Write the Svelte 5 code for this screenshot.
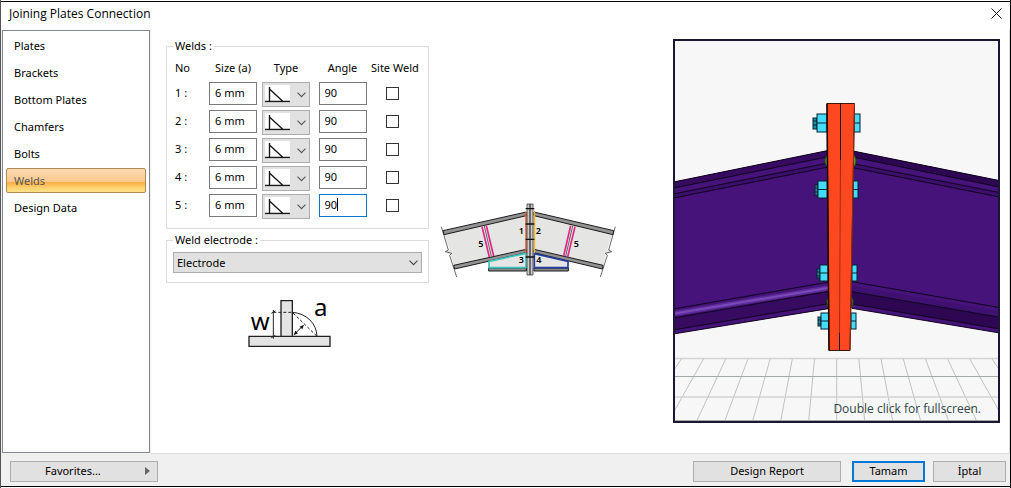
<script lang="ts">
  const pages = ['Plates', 'Brackets', 'Bottom Plates', 'Chamfers', 'Bolts', 'Welds', 'Design Data'];
  let page = $state('Welds');

  let welds = $state(
    [1, 2, 3, 4, 5].map((no) => ({ no, size: '6 mm', type: 'fillet', angle: '90', site: false }))
  );
  let active = $state(5);
  let electrode = $state('Electrode');

  // nut, stub and head positions of each bolt row in the 3D view
  const bolts = [
    { y: 114, h: 18, nut: 817, stub: 813, left: 827, right: 854, head: 6 },
    { y: 181, h: 17, nut: 818, stub: 815, left: 827, right: 853, head: 5 },
    { y: 265, h: 16, nut: 820, stub: 817, left: 828, right: 852, head: 5 },
    { y: 313, h: 16, nut: 821, stub: 818, left: 829, right: 851, head: 5 }
  ];
  const gridLines = [-7, -6, -5, -4, -3, -2, -1, 0, 1, 2, 3, 4, 5, 6, 7];
</script>

<div class="window">
  <header>
    <h1>Joining Plates Connection</h1>
    <button class="close" aria-label="Close">
      <svg width="11" height="11" viewBox="0 0 11 11"><path d="M.5 .5l10 10M10.5 .5l-10 10" stroke="#111" fill="none" /></svg>
    </button>
  </header>

  <main>
    <nav>
      {#each pages as name}
        <button class:selected={page === name} onclick={() => (page = name)}>{name}</button>
      {/each}
    </nav>

    <section class="content">
      <div class="form">
        <fieldset class="welds">
          <legend>Welds :</legend>
          <table>
            <thead>
              <tr>
                <th class="no">No</th>
                <th class="size">Size (a)</th>
                <th class="type">Type</th>
                <th class="angle">Angle</th>
                <th class="site">Site Weld</th>
              </tr>
            </thead>
            <tbody>
              {#each welds as weld}
                <tr>
                  <td class="no">{weld.no} :</td>
                  <td class="size"><input type="text" aria-label="Size {weld.no}" bind:value={weld.size} /></td>
                  <td class="type">
                    <div class="picker">
                      <select aria-label="Type {weld.no}" bind:value={weld.type}>
                        <option value="fillet" aria-label="Fillet"></option>
                      </select>
                      <svg class="weld-icon" width="25" height="18" viewBox="0 0 25 18">
                        <rect width="25" height="18" fill="#fff" />
                        <path d="M4.500 2V16.500M0 16.500H25M4.500 4L18 16.500" stroke="#1a1a1a" stroke-width="1.400" fill="none" />
                      </svg>
                      <svg class="chevron" width="9" height="6" viewBox="0 0 9 6"><path d="M.5 .7l4 4l4-4" stroke="#555" stroke-width="1.100" fill="none" /></svg>
                    </div>
                  </td>
                  <td class="angle">
                    <div class="picker">
                      <input
                        type="text"
                        aria-label="Angle {weld.no}"
                        class:active={active === weld.no}
                        bind:value={weld.angle}
                        onfocus={() => (active = weld.no)}
                      />
                      {#if active === weld.no}<span class="caret"></span>{/if}
                    </div>
                  </td>
                  <td class="site"><input type="checkbox" aria-label="Site weld {weld.no}" bind:checked={weld.site} /></td>
                </tr>
              {/each}
            </tbody>
          </table>
        </fieldset>

        <fieldset class="electrode">
          <legend>Weld electrode :</legend>
          <div class="picker">
            <select aria-label="Weld electrode" bind:value={electrode}>
              <option>Electrode</option>
            </select>
            <svg class="chevron" width="9" height="6" viewBox="0 0 9 6"><path d="M.5 .7l4 4l4-4" stroke="#444" stroke-width="1.100" fill="none" /></svg>
          </div>
        </fieldset>

        <svg class="throat" width="84" height="60" viewBox="25 -8 252 180">
          <g fill="#e4e4e4" stroke="#222" stroke-width="4">
            <path d="M124 30H158V137H124zM28 137H271V167H28z" />
          </g>
          <g fill="none" stroke="#222" stroke-width="3">
            <path d="M101 58V144M158 65C200 68 231 98 232 137" />
            <path d="M101 65H158L232 137" stroke-dasharray="9 6" />
            <path d="M167 128L188 107" />
          </g>
          <path d="M95 68l12-7M95 141l12-7" stroke="#222" stroke-width="3" />
          <path d="M162 134l5-14l8 8zM193 102l-5 14l-8-8z" fill="#111" />
          <text x="33" y="119" font-size="72">w</text>
          <text x="223" y="77" font-size="72">a</text>
        </svg>
      </div>

      <svg class="joint" width="177" height="77" viewBox="15 20 531 231">
        <g stroke="#1c1c1c" stroke-width="3" stroke-linejoin="round">
          <path d="M25 112L274 55V165L58 217L47 172L40 176L33 167L45 163z" fill="#e5e5e4" stroke="none" />
          <path d="M535 112L297 55V165L503 217L514 172L520 176L527 167L516 163z" fill="#e5e5e4" stroke="none" />
          <path d="M24 106L274 50V61L27 118zM56 210L274 162V172L59 221z" fill="#929292" />
          <path d="M536 106L297 50V61L534 118zM504 210L297 162V172L502 221z" fill="#929292" />
          <path d="M161 218H274V227H161zM297 218H400V227H297z" fill="#888" />
          <path d="M19 94L40 164L31 169L50 174L44 180L65 245M541 94L521 164L530 169L511 174L517 180L496 245" fill="none" stroke-width="2" />
        </g>
        <path d="M162 217V198L273 174V217z" fill="#e5e5e4" stroke="#3cc3bf" stroke-width="5" />
        <path d="M298 217V175L399 198V217z" fill="#e5e5e4" stroke="#243c9c" stroke-width="5" />
        <path d="M141 94L163 185M154 91L176 182M407 91L386 182M420 94L398 185" stroke="#e32486" stroke-width="5" />
        <path d="M148 92L169 183M413 92L392 183" stroke="#222" stroke-width="2" />
        <path d="M273 50V173" stroke="#e66733" stroke-width="5" />
        <path d="M298 50V173" stroke="#efb52d" stroke-width="5" />
        <path d="M276 26H285V239H276zM285 26H294V239H285z" fill="#cbcbcb" stroke="#1c1c1c" stroke-width="2" />
        <path d="M272 40H298M272 86H298M272 132H298M272 185H298" stroke="#111" stroke-width="4" />
        <g font-size="27" font-weight="600">
          <text x="251" y="116">1</text>
          <text x="302" y="116">2</text>
          <text x="251" y="202">3</text>
          <text x="304" y="202">4</text>
          <text x="130" y="156">5</text>
          <text x="416" y="156">5</text>
        </g>
      </svg>

      <div class="viewer">
        <svg viewBox="675 41 323 380" preserveAspectRatio="xMidYMid slice">
          <rect x="675" y="41" width="323" height="380" fill="#f7f7f7" />

          <g fill="none">
            {#each gridLines as i}
              <path d="M{836.7 + 22.2 * i} 359L{836.7 + 28 * i} 421" stroke="#bfc2bf" />
            {/each}
            <path d="M675 358.500H998M675 397H998" stroke="#d2d3d2" stroke-width="1.500" />
            <path d="M675 376.500H998M675 420.500H998" stroke="#a4aaa4" />
          </g>

          <!-- left beam -->
          <path d="M675 181.700L827 150.700L829 308.700L675 333.700z" fill="#451379" />
          <path d="M675 181.700L827 150.700V157L675 187.700z" fill="#360b60" />
          <path d="M675 193.700L827 163.300V167.300L675 197.700z" fill="#3c0f6c" />
          <path d="M675 317.700L829 291.400V303.700L675 329.700z" fill="#360b60" />
          <path d="M675 313.500L829 287.700" stroke="#5e2d9a" stroke-width="5" />
          <path d="M675 313.500L829 287.700" stroke="#7a4ab8" stroke-width="2" />
          <path
            d="M675 181.700L827 150.700M675 187.700L827 157M675 193.700L827 163.300M675 197.700L827 167.300M675 308.700L829 282M675 317.700L829 291.400M675 329.700L829 303.700M675 333.700L829 308.500"
            stroke="#12031f"
          />

          <!-- right beam -->
          <path d="M853 151L998 180.300V332.700L850 308z" fill="#451379" />
          <path d="M853 151L998 180.300V186.700L853 157z" fill="#2e0753" />
          <path d="M853 163.700L998 192.300V196.700L853 167.700z" fill="#3c0f6c" />
          <path d="M852 286L998 311V317L852 291.700z" fill="#3e1070" />
          <path d="M852 291.700L998 317V328.700L852 304z" fill="#2e0753" />
          <path
            d="M853 151L998 180.300M853 157L998 186.700M853 163.700L998 192.300M853 167.700L998 196.700M852 281.700L998 307.300M852 291.700L998 317M852 304L998 328.700M852 308.300L998 332.700"
            stroke="#12031f"
          />

          <path d="M827 155l-2 4v4l2 4M854 155l2 4v4l-2 4M829 296l-2 4v8M851 296l2 4v8" fill="#4f9430" stroke="#204015" />

          {#each bolts as b}
            <rect x={b.stub} y={b.y + 4} width={b.nut - b.stub} height={b.h - 7} fill="#1d8da5" stroke="#0a2430" />
            <path d="M{b.stub} {b.y + 7}H{b.nut}M{b.stub} {b.y + 11}H{b.nut}" stroke="#0a2430" />
            <rect x={b.nut} y={b.y} width={b.left - b.nut} height={b.h} fill="#43dcff" stroke="#07222c" />
            <rect x={b.right} y={b.y} width={b.head} height={b.h} fill="#43dcff" stroke="#07222c" />
            <path
              d="M{b.nut} {b.y + b.h / 2}H{b.left}M{b.right} {b.y + b.h / 2}H{b.right + b.head}"
              stroke="#0a2430"
            />
          {/each}

          <!-- end plates -->
          <path d="M827 103.500H854.500L850 350.500H829z" fill="#ff4820" stroke="#40150a" />
          <path d="M827 103.500L829 350.500" stroke="#160805" stroke-width="1.500" />
          <path d="M840.500 103V160M839.500 333V350" stroke="#111" />
          <path d="M840.500 160L839.500 333" stroke="#a32b14" />
          <path d="M854.500 104L850 350" stroke="#8e2812" />
        </svg>
        <p>Double click for fullscreen.</p>
      </div>
    </section>
  </main>

  <footer>
    <button class="favorites">
      <span>Favorites...</span>
      <svg width="5" height="8" viewBox="0 0 5 8"><path d="M0 0L5 4L0 8z" fill="#666" /></svg>
    </button>
    <button class="report">Design Report</button>
    <button class="ok">Tamam</button>
    <button class="cancel">İptal</button>
  </footer>
</div>

<style>
  :global(body) {
    margin: 0;
    background: #fff;
  }

  .window {
    box-sizing: border-box;
    min-height: 100vh;
    display: flex;
    flex-direction: column;
    padding: 1px 0;
    border-left: 1px solid #555;
    border-right: 1px solid #000;
    font-family: 'Noto Sans', 'Open Sans', sans-serif;
    font-size: 11px;
    line-height: 14px;
    color: #000;
  }

  button,
  input,
  select {
    box-sizing: border-box;
    font: inherit;
    color: inherit;
    margin: 0;
    border-radius: 0;
  }

  header {
    display: flex;
    align-items: center;
    justify-content: space-between;
    height: 28px;
    padding: 0 8px;
    border-top: 1px solid #000;
  }

  h1 {
    margin: 0;
    padding-bottom: 4px;
    font-family: 'Open Sans', 'Noto Sans', sans-serif;
    font-size: 12px;
    font-weight: 400;
    line-height: 16px;
  }

  .close {
    display: flex;
    padding: 0;
    margin-bottom: 6px;
    border: 0;
    background: none;
  }

  main {
    flex: 1;
    display: flex;
    gap: 1px;
    padding-left: 1px;
    background: #f0f0f0;
  }

  nav {
    box-sizing: border-box;
    width: 148px;
    display: flex;
    flex-direction: column;
    gap: 2px;
    margin-bottom: 1px;
    padding: 2px 3px;
    border: 1px solid #828790;
    background: #fff;
  }

  nav button {
    height: 25px;
    padding: 0 7px;
    border: 1px solid transparent;
    border-radius: 2px;
    background: none;
    text-align: left;
  }

  nav button.selected {
    border-color: #b08a55;
    background: linear-gradient(#fbd9b4, #fbc98c 55%, #fba941 56%, #fdd06c 80%, #fde28c);
    color: #555;
  }

  .content {
    flex: 1;
    display: flex;
    align-items: flex-start;
    padding: 9px 9px 30px 15px;
    border-right: 1px solid #dcdcdc;
    border-bottom: 1px solid #dcdcdc;
    background: #fff;
  }

  .form {
    width: 263px;
    display: flex;
    flex-direction: column;
  }

  fieldset {
    box-sizing: border-box;
    margin: 0;
    border: 1px solid #dcdcdc;
    min-width: 0;
  }

  legend {
    padding: 0 2px;
  }

  .welds {
    padding: 6px 0;
  }

  .welds legend {
    margin-left: 6px;
  }

  table {
    width: 100%;
    table-layout: fixed;
    border-collapse: collapse;
  }

  th,
  td {
    padding: 0;
    font-weight: 400;
    text-align: center;
    white-space: nowrap;
    vertical-align: top;
  }

  th {
    height: 21px;
    padding-top: 2px;
  }

  td {
    height: 28px;
  }

  th.no {
    width: 33px;
  }

  .no {
    padding-left: 8px;
    text-align: left;
  }

  td.no {
    height: 24px;
    padding-top: 4px;
  }

  th.size {
    width: 50px;
  }

  th.type {
    width: 56px;
  }

  th.angle {
    width: 57px;
  }

  .site {
    padding-right: 14px;
  }

  td input[type='text'] {
    display: block;
    width: 48px;
    height: 23px;
    margin: 0 auto;
    padding: 0 5px 2px;
    border: 1px solid #7a7a7a;
    background: #fff;
    outline: none;
  }

  td input[type='text'].active {
    border-color: #0078d7;
  }

  .picker {
    position: relative;
  }

  td .picker {
    width: 48px;
    margin: 0 auto;
  }

  .picker select {
    display: block;
    appearance: none;
    border: 1px solid #adadad;
    background: #e1e1e1;
  }

  td select {
    width: 48px;
    height: 25px;
  }

  .weld-icon {
    position: absolute;
    left: 3px;
    top: 3px;
    pointer-events: none;
  }

  .chevron {
    position: absolute;
    right: 4px;
    top: 10px;
    pointer-events: none;
  }

  .caret {
    position: absolute;
    left: 18px;
    top: 4px;
    width: 1px;
    height: 13px;
    background: #000;
  }

  input[type='checkbox'] {
    display: block;
    appearance: none;
    width: 13px;
    height: 13px;
    margin: 5px auto 0;
    border: 1px solid #333;
    background: #fff;
  }

  input[type='checkbox']:checked {
    background: #333;
  }

  .electrode {
    margin-top: 4px;
    padding: 5px 6px 9px;
  }

  .electrode select {
    width: 100%;
    height: 21px;
    padding: 0 3px;
  }

  .electrode .chevron {
    top: 8px;
  }

  .throat {
    margin: 5px 0 0 82px;
  }

  .joint {
    flex: none;
    margin: 163px 56px 0 11px;
  }

  .viewer {
    position: relative;
    flex: 1;
    display: flex;
    border: 2px solid #1b1633;
  }

  .viewer svg {
    width: 100%;
  }

  .viewer p {
    position: absolute;
    right: 17px;
    bottom: 4px;
    margin: 0;
    font-family: 'Open Sans', 'Noto Sans', sans-serif;
    font-size: 12px;
    line-height: 16px;
    color: #2f4545;
  }

  footer {
    box-sizing: border-box;
    display: flex;
    align-items: center;
    height: 33px;
    padding: 2px 4px 0 9px;
    border-bottom: 1px solid #000;
    background: #f0f0f0;
  }

  footer button {
    width: 73px;
    height: 21px;
    padding: 0;
    border: 1px solid #adadad;
    background: #e1e1e1;
  }

  footer .favorites {
    display: flex;
    align-items: center;
    justify-content: space-between;
    width: 148px;
    margin-right: auto;
    padding: 0 7px 0 34px;
  }

  footer .report {
    width: 148px;
  }

  footer .ok {
    margin: 0 8px 0 11px;
    border: 2px solid #0078d7;
  }
</style>
